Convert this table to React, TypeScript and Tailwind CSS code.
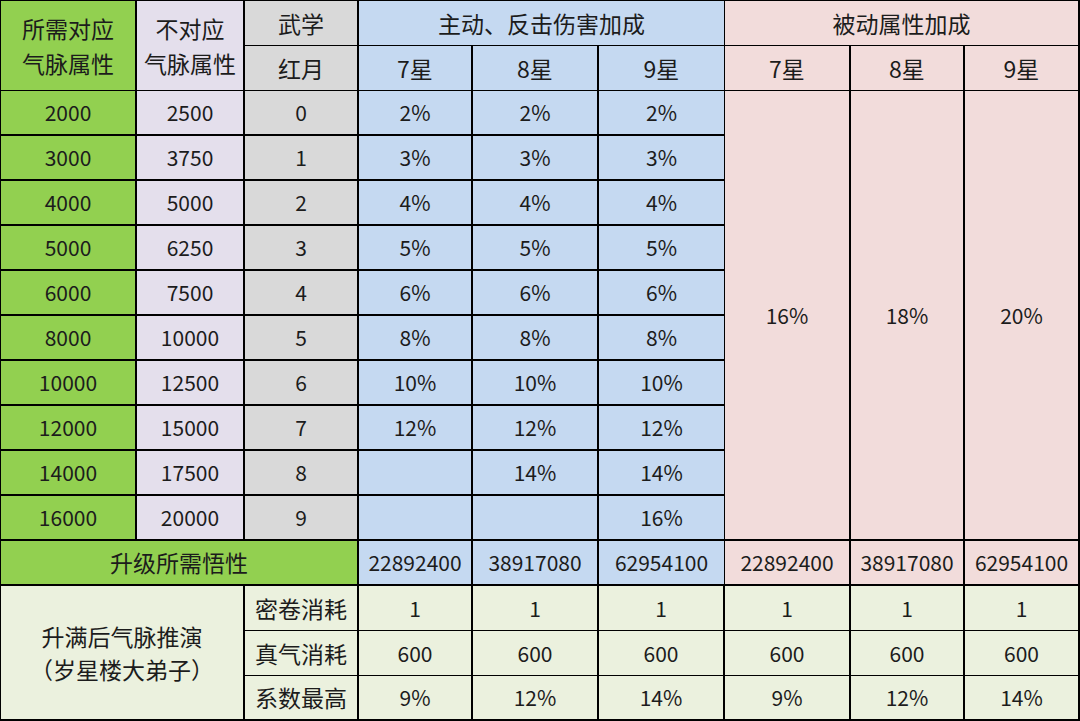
import React from "react";

const green = ["2000","3000","4000","5000","6000","8000","10000","12000","14000","16000"];
const lav = ["2500","3750","5000","6250","7500","10000","12500","15000","17500","20000"];
const s7 = ["2%","3%","4%","5%","6%","8%","10%","12%","",""];
const s8 = ["2%","3%","4%","5%","6%","8%","10%","12%","14%",""];
const s9 = ["2%","3%","4%","5%","6%","8%","10%","12%","14%","16%"];

const C = "flex items-center justify-center border-black text-[21px] text-[#1c1c1c] leading-none";
const Z = "text-[23px]";

export default function App() {
  return (
    <div
      className="w-[1080px] h-[721px] bg-white border-t border-l border-black grid grid-cols-[136px_108px_114px_114px_126px_126px_126px_114px_115px] grid-rows-[repeat(16,45px)] overflow-hidden"
      style={{ fontFamily: '"Noto Sans CJK SC", "Noto Sans", sans-serif' }}
    >
      {/* header */}
      <div className={`${C} col-start-1 row-start-1 row-span-2 bg-[#92d050] border-r-2 border-b flex-col ${Z}`}>
        <span className="leading-[35px]">所需对应</span>
        <span className="leading-[35px]">气脉属性</span>
      </div>
      <div className={`${C} col-start-2 row-start-1 row-span-2 bg-[#e4dfec] border-r-2 border-b flex-col ${Z}`}>
        <span className="leading-[35px]">不对应</span>
        <span className="leading-[35px]">气脉属性</span>
      </div>
      <div className={`${C} col-start-3 row-start-1 bg-[#d9d9d9] border-r-2 border-b ${Z}`}>武学</div>
      <div className={`${C} col-start-3 row-start-2 bg-[#d9d9d9] border-r-2 border-b ${Z}`}>红月</div>
      <div className={`${C} col-start-4 col-span-3 row-start-1 bg-[#c5d9f1] border-r border-b ${Z}`}>主动、反击伤害加成</div>
      <div className={`${C} col-start-7 col-span-3 row-start-1 bg-[#f2dcdb] border-r-2 border-b ${Z}`}>被动属性加成</div>
      {["7星","8星","9星"].map((t, i) => (
        <div key={"b"+i} className={`${C} row-start-2 bg-[#c5d9f1] ${i===2?"border-r":"border-r-2"} border-b ${Z} ${["col-start-4","col-start-5","col-start-6"][i]}`}>{t}</div>
      ))}
      {["7星","8星","9星"].map((t, i) => (
        <div key={"p"+i} className={`${C} row-start-2 bg-[#f2dcdb] border-r-2 border-b ${Z} ${["col-start-7","col-start-8","col-start-9"][i]}`}>{t}</div>
      ))}

      {/* data rows */}
      {green.map((g, r) => (
        <React.Fragment key={r}>
          <div className={`${C} col-start-1 bg-[#92d050] border-r-2 border-b-2`}>{g}</div>
          <div className={`${C} col-start-2 bg-[#e4dfec] border-r-2 border-b-2`}>{lav[r]}</div>
          <div className={`${C} col-start-3 bg-[#d9d9d9] border-r-2 border-b-2`}>{r}</div>
          <div className={`${C} col-start-4 bg-[#c5d9f1] border-r-2 border-b-2`}>{s7[r]}</div>
          <div className={`${C} col-start-5 bg-[#c5d9f1] border-r-2 border-b-2`}>{s8[r]}</div>
          <div className={`${C} col-start-6 bg-[#c5d9f1] border-r border-b-2`}>{s9[r]}</div>
        </React.Fragment>
      ))}
      <div className={`${C} col-start-7 row-start-3 row-span-10 bg-[#f2dcdb] border-r-2 border-b-2`}>16%</div>
      <div className={`${C} col-start-8 row-start-3 row-span-10 bg-[#f2dcdb] border-r-2 border-b-2`}>18%</div>
      <div className={`${C} col-start-9 row-start-3 row-span-10 bg-[#f2dcdb] border-r-2 border-b-2`}>20%</div>

      {/* upgrade row */}
      <div className={`${C} col-start-1 col-span-3 row-start-13 bg-[#92d050] border-r-2 border-b-2 ${Z}`}>升级所需悟性</div>
      {["22892400","38917080","62954100"].map((t, i) => (
        <div key={"ub"+i} className={`${C} row-start-13 bg-[#c5d9f1] ${i===2?"border-r":"border-r-2"} border-b-2 ${["col-start-4","col-start-5","col-start-6"][i]}`}>{t}</div>
      ))}
      {["22892400","38917080","62954100"].map((t, i) => (
        <div key={"up"+i} className={`${C} row-start-13 bg-[#f2dcdb] border-r-2 border-b-2 ${["col-start-7","col-start-8","col-start-9"][i]}`}>{t}</div>
      ))}

      {/* bottom */}
      <div className={`${C} col-start-1 col-span-2 row-start-14 row-span-3 bg-[#ebf1de] border-r-2 border-b-2 flex-col ${Z}`}>
        <span className="leading-[33px]">升满后气脉推演</span>
        <span className="leading-[33px]">（岁星楼大弟子）</span>
      </div>
      {[
        ["密卷消耗", ["1","1","1","1","1","1"]],
        ["真气消耗", ["600","600","600","600","600","600"]],
        ["系数最高", ["9%","12%","14%","9%","12%","14%"]],
      ].map(([label, vals], r) => (
        <React.Fragment key={"bt"+r}>
          <div className={`${C} col-start-3 bg-[#ebf1de] border-r-2 ${r===2?"border-b-2":"border-b"} ${Z} ${["row-start-14","row-start-15","row-start-16"][r]}`}>{label as string}</div>
          {(vals as string[]).map((v, i) => (
            <div key={i} className={`${C} bg-[#ebf1de] border-r-2 ${r===2?"border-b-2":"border-b"} ${["row-start-14","row-start-15","row-start-16"][r]} ${["col-start-4","col-start-5","col-start-6","col-start-7","col-start-8","col-start-9"][i]}`}>{v}</div>
          ))}
        </React.Fragment>
      ))}
    </div>
  );
}
